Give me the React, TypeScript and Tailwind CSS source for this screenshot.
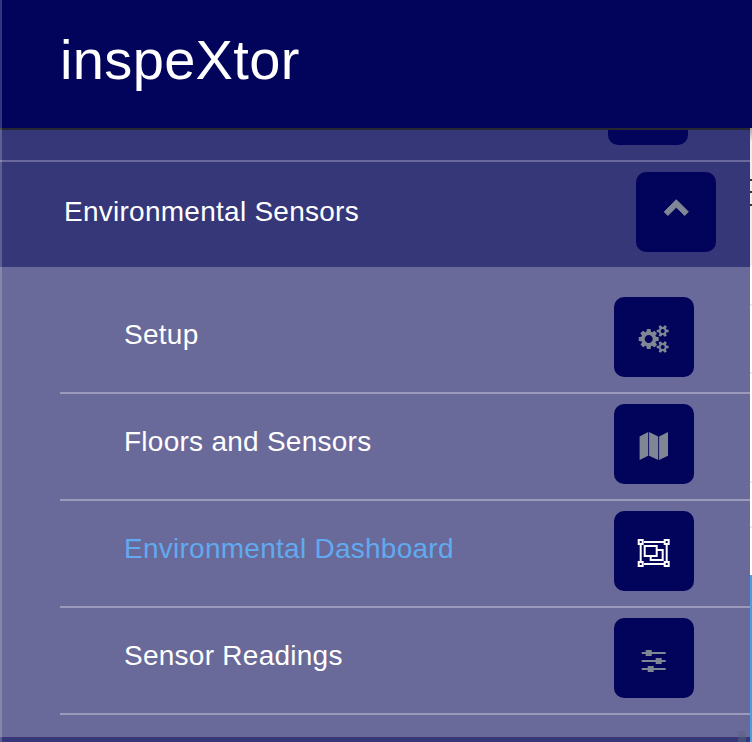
import type { ReactNode } from "react";

const COGS =
  "M896 896q0-106-75-181t-181-75-181 75-75 181 75 181 181 75 181-75 75-181zm768 512q0-52-38-90t-90-38-90 38-38 90q0 53 37.500 90.500t90.500 37.500 90.500-37.500 37.500-90.500zm0-1024q0-52-38-90t-90-38-90 38-38 90q0 53 37.500 90.500t90.500 37.500 90.500-37.500 37.500-90.500zm-384 421v185q0 10-7 19.500t-16 10.500l-155 24q-11 35-32 76 34 48 90 115 7 11 7 20 0 12-7 19-23 30-82.500 89.500t-78.500 59.500q-11 0-21-7l-115-90q-37 19-77 31-11 108-23 155-7 24-30 24h-186q-11 0-20-7.500t-10-17.500l-23-153q-34-10-75-31l-118 89q-7 7-20 7-11 0-21-8-144-133-144-160 0-9 7-19 10-14 41-53t47-61q-23-44-35-82l-152-24q-10-1-17-9.500t-7-19.500v-185q0-10 7-19.500t16-10.500l155-24q11-35 32-76-34-48-90-115-7-11-7-20 0-12 7-20 22-30 82-89t79-59q11 0 21 7l115 90q34-18 77-32 11-108 23-154 7-24 30-24h186q11 0 20 7.500t10 17.500l23 153q34 10 75 31l118-89q8-7 20-7 11 0 21 8 144 133 144 160 0 8-7 19-12 16-42 54t-45 60q23 48 34 82l152 23q10 2 17 10.500t7 19.500zm640 533v140q0 16-149 31-12 27-30 52 51 113 51 138 0 4-4 7-122 71-124 71-8 0-46-47t-52-68q-20 2-30 2t-30-2q-14 21-52 68t-46 47q-2 0-124-71-4-3-4-7 0-25 51-138-18-25-30-52-149-15-149-31v-140q0-16 149-31 13-29 30-52-51-113-51-138 0-4 4-7 4-2 35-20t59-34 30-16q8 0 46 46.500t52 67.500q20-2 30-2t30 2q51-71 92-112l6-2q4 0 124 70 4 3 4 7 0 25-51 138 17 23 30 52 149 15 149 31zm0-1024v140q0 16-149 31-12 27-30 52 51 113 51 138 0 4-4 7-122 71-124 71-8 0-46-47t-52-68q-20 2-30 2t-30-2q-14 21-52 68t-46 47q-2 0-124-71-4-3-4-7 0-25 51-138-18-25-30-52-149-15-149-31v-140q0-16 149-31 13-29 30-52-51-113-51-138 0-4 4-7 4-2 35-20t59-34 30-16q8 0 46 46.500t52 67.500q20-2 30-2t30 2q51-71 92-112l6-2q4 0 124 70 4 3 4 7 0 25-51 138 17 23 30 52 149 15 149 31z";

// Every icon is drawn on the 80px square of its button.
function IconButton({ children, active = false }: { children: ReactNode; active?: boolean }) {
  return (
    <button
      type="button"
      className={`block size-20 shrink-0 overflow-hidden rounded-[10px] bg-[#02035a] ${active ? "text-white" : "text-[#7f8794]"}`}
    >
      <svg viewBox="0 0 80 80" className="size-20" fill="currentColor">
        {children}
      </svg>
    </button>
  );
}

const ChevronUp = () => (
  <path
    d="M40.300 27.700 52.400 39.800 48.700 43.600 40.300 35.200 31.900 43.600 28.200 39.800z"
    stroke="currentColor"
    strokeWidth="0.9"
    strokeLinejoin="round"
  />
);

const Cogs = () => <path transform="translate(24.700 28) scale(.015625)" d={COGS} />;

const MapIcon = () => (
  <path d="M25.600 32.400 34.200 28V51.800L25.600 56zM35.100 28 44.200 32.400V56L35.100 51.800zM45.100 32.400 54 28V51.800L45.100 56z" />
);

const ObjectGroup = () => (
  <g fill="none" stroke="currentColor" strokeWidth="2">
    <path d="M30 31H50M30 53H50M26.700 34V50M52.700 34V50" />
    <path d="M24.700 29h4v4h-4zM50.700 29h4v4h-4zM24.700 51h4v4h-4zM50.700 51h4v4h-4z" />
    <path d="M30.700 35h12v10h-12zM43.700 39h5v10h-12v-3" />
  </g>
);

const Sliders = () => (
  <path d="M27.700 34h24v2h-24zM27.700 42h24v2h-24zM27.700 50h24v2h-24zM31.700 32h6v6h-6zM41.700 40h6v6h-6zM33.700 48h6v6h-6z" />
);

const ITEMS = [
  { label: "Setup", icon: <Cogs />, active: false },
  { label: "Floors and Sensors", icon: <MapIcon />, active: false },
  { label: "Environmental Dashboard", icon: <ObjectGroup />, active: true },
  { label: "Sensor Readings", icon: <Sliders />, active: false },
];

function Sidebar() {
  return (
    <nav className="flex w-[750px] shrink-0 flex-col border-t-2 border-[#27272f] bg-[#363779] text-[28px] leading-8 tracking-[0.26px]">
      <div className="flex h-8 shrink-0 items-start justify-end overflow-hidden border-b-2 border-[#69699b] pr-[62px]">
        <div className="h-[15px] w-20 rounded-b-[10px] bg-[#02035a]" />
      </div>
      <div className="flex h-[105px] shrink-0 items-start justify-between pt-[10px] pr-[34px] pl-16">
        <span className="pt-6 text-white">Environmental Sensors</span>
        <IconButton>
          <ChevronUp />
        </IconButton>
      </div>
      <ul className="h-[470px] shrink-0 bg-[#69699a] pt-5 pl-[60px]">
        {ITEMS.map((item) => (
          <li
            key={item.label}
            className="flex h-[107px] items-start justify-between border-b-2 border-[#9b9abc] pt-[10px] pr-14 pl-16"
          >
            <span className={`pt-[22px] ${item.active ? "text-[#61aaf0]" : "text-white"}`}>{item.label}</span>
            <IconButton active={item.active}>{item.icon}</IconButton>
          </li>
        ))}
      </ul>
    </nav>
  );
}

// The sliver of page content that the open menu leaves uncovered.
function PageEdge() {
  return (
    <div className="flex w-0.5 shrink-0 flex-col bg-white">
      <div className="flex h-[138px] shrink-0 flex-col bg-gradient-to-b from-[#a9a8a8] via-[#efeded] via-10% to-[#efeded] pt-[51px]">
        <i className="h-0.5 bg-[#333]" />
        <i className="mt-[10px] h-0.5 bg-[#333]" />
        <i className="mt-[11px] h-0.5 bg-[#333]" />
      </div>
      <i className="mt-[38px] h-0.5 shrink-0 bg-[#e8e8e8]" />
      <i className="mt-[66px] h-0.5 shrink-0 bg-[#e8e8e8]" />
      <i className="mt-[107px] h-0.5 shrink-0 bg-[#e8e8e8]" />
      <i className="mt-[43px] h-0.5 shrink-0 bg-[#e8e8e8]" />
      <div className="mt-[47px] flex-1 bg-[#4a9fe3]" />
    </div>
  );
}

export default function App() {
  return (
    <div className="relative flex h-[742px] w-[752px] flex-col overflow-hidden font-['Liberation_Sans',Arial,sans-serif]">
      <header className="flex h-32 shrink-0 items-start bg-[#02035a] pt-7 pl-[60px]">
        <h1 className="text-[56px] leading-[64px] tracking-[0.35px] text-white">inspeXtor</h1>
      </header>
      <div className="flex min-h-0 flex-1">
        <Sidebar />
        <PageEdge />
      </div>
      <div className="absolute inset-y-0 left-0 w-0.5 bg-white/20" />
      <div className="absolute right-1.5 bottom-0 h-[11px] w-2 bg-[#5b6484]/50" />
    </div>
  );
}
